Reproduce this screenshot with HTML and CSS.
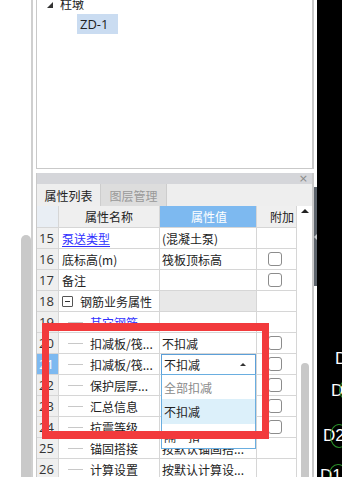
FILE: index.html
```html
<!DOCTYPE html>
<html>
<head>
<meta charset="utf-8">
<link rel="stylesheet" href="styles.css">
</head>
<body>
<div class="app">
  <div class="gutter"></div>
  <div class="vscroll"><div class="vthumb"></div></div>
  <div class="sep"></div>
  <div class="main">
    <div class="tree">
      <div class="tree-row parent"><span class="expander"></span><span>柱墩</span></div>
      <div class="tree-row child"><span class="sel">ZD-1</span></div>
    </div>
    <div class="props">
      <div class="titlebar"><span class="close">×</span></div>
      <div class="tabs"><div class="tab active">属性列表</div><div class="tab inactive">图层管理</div></div>
      <div class="grid-wrap">
        <div class="grid">
          <div class="c h num"></div><div class="c h name">属性名称</div><div class="c h val">属性值</div><div class="c h add">附加</div>

          <div class="c num">15</div><div class="c name"><span class="link">泵送类型</span></div><div class="c val">(混凝土泵)</div><div class="c add"></div>
          <div class="c num">16</div><div class="c name">底标高(m)</div><div class="c val">筏板顶标高</div><div class="c add"><span class="chk"></span></div>
          <div class="c num">17</div><div class="c name">备注</div><div class="c val"></div><div class="c add"><span class="chk"></span></div>
          <div class="c num">18</div><div class="c name"><span class="minus"></span><span class="group">钢筋业务属性</span></div><div class="c val grey"></div><div class="c add"></div>
          <div class="c num">19</div><div class="c name"><span class="branch"></span><span class="link">其它钢筋</span></div><div class="c val"></div><div class="c add"></div>
          <div class="c num">20</div><div class="c name"><span class="branch"></span>扣减板/筏...</div><div class="c val">不扣减</div><div class="c add"><span class="chk"></span></div>
          <div class="c num selnum">21</div><div class="c name"><span class="branch"></span>扣减板/筏...</div>
          <div class="c val combo-cell">
            <div class="combo"><span>不扣减</span><span class="arrow"></span></div>
            <div class="dropdown">
              <div class="opt dim">全部扣减</div>
              <div class="opt hot">不扣减</div>
              <div class="opt">隔一扣一</div>
            </div>
          </div>
          <div class="c add"><span class="chk"></span></div>
          <div class="c num">22</div><div class="c name"><span class="branch"></span>保护层厚...</div><div class="c val"></div><div class="c add"><span class="chk"></span></div>
          <div class="c num">23</div><div class="c name"><span class="branch"></span>汇总信息</div><div class="c val"></div><div class="c add"><span class="chk"></span></div>
          <div class="c num">24</div><div class="c name"><span class="branch"></span>抗震等级</div><div class="c val"></div><div class="c add"><span class="chk"></span></div>
          <div class="c num">25</div><div class="c name"><span class="branch"></span>锚固搭接</div><div class="c val">按默认锚固搭...</div><div class="c add"></div>
          <div class="c num">26</div><div class="c name"><span class="branch"></span>计算设置</div><div class="c val">按默认计算设...</div><div class="c add"></div>
        </div>
        <div class="scrollbar">
          <div class="up"></div>
          <div class="track"><div class="thumb"></div></div>
        </div>
      </div>
    </div>
  </div>
  <div class="strip"><div class="strip-dark"><span class="strip-arrow"></span></div></div>
  <div class="canvas">
    <span class="lbl l1">D</span>
    <span class="lbl l2">D</span>
    <span class="ring r2"></span>
    <span class="lbl l3">D2</span>
    <span class="ring r3"></span>
    <span class="lbl l4">D1</span>
    <span class="ring r4"></span>
  </div>
</div>
<div class="redbox"></div>
</body>
</html>
```

FILE: styles.css
```css
* { box-sizing: border-box; margin: 0; padding: 0; }
html, body { width: 342px; height: 477px; overflow: hidden; background: #fff; }
body {
  position: relative;
  font-family: "Noto Sans CJK SC", "Noto Sans", sans-serif;
  font-size: 12px;
  color: #222;
}
.app { display: flex; height: 477px; }
.gutter { width: 21px; flex: none; }
.vscroll { width: 10px; flex: none; display: flex; flex-direction: column; padding-top: 235px; }
.vthumb { flex: 1; background: #c9c9c9; border-radius: 5px 5px 0 0; }
.sep { width: 5px; flex: none; border-left: 2px solid #cfcfcf; }

.main { width: 278px; flex: none; display: flex; flex-direction: column; overflow: hidden; }

.tree {
  height: 169px; flex: none;
  border: 1px solid #c9c9c9; border-top: 0; border-right-width: 2px;
}
.tree-row { display: flex; align-items: center; white-space: nowrap; }
.tree-row.parent { height: 22px; margin-top: -8px; padding-left: 10px; }
.tree-row.child { height: 20px; padding-left: 40px; }
.expander {
  width: 0; height: 0; margin-right: 7px;
  border-left: 6px solid transparent; border-bottom: 6px solid #333;
  margin-top: 4px;
}
.sel { background: #cadcf1; height: 20px; line-height: 20px; padding: 0 9px 0 3px; font-size: 13px; font-family: "Open Sans", "Noto Sans", sans-serif; }

.props {
  flex: 1; margin-top: 4px; display: flex; flex-direction: column;
  border-left: 1px solid #c9c9c9; border-right: 2px solid #c9c9c9;
}
.titlebar { height: 11px; background: #d5d6da; display: flex; justify-content: flex-end; align-items: center; padding-right: 4px; }
.close { color: #8a8a8a; font-size: 11px; line-height: 11px; font-family: "DejaVu Sans", sans-serif; }
.tabs { height: 22px; background: #eeeeee; display: flex; }
.tab { display: flex; align-items: center; justify-content: center; font-size: 12px; }
.tab.active { width: 64px; color: #222; border-right: 1px solid #cdcdcd; }
.tab.inactive { width: 66px; color: #999; background: #dddddd; border-right: 1px solid #cdcdcd; }

.grid-wrap { flex: 1; display: flex; }
.grid {
  width: 260px; flex: none;
  display: grid; grid-template-columns: 22px 101px 97px 40px;
  grid-template-rows: 22px; grid-auto-rows: 21px;
}
.c {
  border-right: 1px solid #d6d6d6; border-bottom: 1px solid #d6d6d6;
  display: flex; align-items: center; white-space: nowrap;
  padding-left: 3px;
}
.c.h { justify-content: center; padding-left: 0; background: #efefef; }
.c.h.num { background: #e9eef4; }
.c.h.val { background: #7db9f0; color: #fff; }
.c.num { background: #efefef; font-family: "Open Sans", "Noto Sans", sans-serif; font-size: 13px; color: #333; padding-left: 2px; }
.c.num.selnum { background: #7db9f0; color: #fff; }
.c.val { padding-left: 2px; }
.c.val.grey { background: #e8e8e8; }
.c.add { padding-left: 11px; }
.link { color: #3030ff; text-decoration: underline; text-underline-offset: 2px; }
.minus {
  width: 11px; height: 11px; border: 1px solid #555; border-radius: 1px; margin-right: 7px;
  display: flex; align-items: center; justify-content: center; flex: none;
}
.minus::before { content: ""; width: 5px; height: 1px; background: #333; }
.branch { width: 15px; height: 1px; background: #c8c8c8; margin: 0 7px 0 6px; flex: none; }
.chk { width: 14px; height: 14px; border: 1px solid #8c8c8c; border-radius: 3px; background: #fff; }

.combo-cell { position: relative; padding: 0; overflow: visible; border-right-color: #d6d6d6; }
.combo {
  flex: 1; height: 21px; margin-left: -1px; margin-bottom: -1px;
  border: 1px solid #5b9fd8; display: flex; align-items: center; justify-content: space-between;
  padding: 0 9px 0 2px; background: #fff;
}
.arrow { width: 0; height: 0; border-left: 3px solid transparent; border-right: 3px solid transparent; border-bottom: 3px solid #333; }
.dropdown {
  position: absolute; left: 1px; top: 20px; width: 95px; height: 75px;
  border: 1px solid #6aaee0; background: #fff; z-index: 2;
}
.opt { height: 24px; display: flex; align-items: center; padding-left: 2px; }
.opt.dim { color: #8a8a8a; }
.opt.hot { background: #dcf0fa; height: 25px; }

.scrollbar { flex: 1; display: flex; flex-direction: column; background: #fff; }
.up { height: 21px; display: flex; justify-content: center; padding-top: 3px; }
.up::before { content: ""; width: 0; height: 0; border-left: 4px solid transparent; border-right: 4px solid transparent; border-bottom: 4px solid #222; }
.track { flex: 1; padding: 136px 3px 0 4px; display: flex; }
.thumb { flex: 1; background: #c8c8c8; border-radius: 4px 4px 0 0; }

.strip { width: 3px; flex: none; padding-top: 187px; }
.strip-dark { height: 99px; background: #5d646c; position: relative; }
.strip-arrow { position: absolute; left: 0; top: 47px; width: 0; height: 0; border-top: 3px solid transparent; border-bottom: 3px solid transparent; border-right: 3px solid #c9ccd0; }

.canvas { flex: 1; background: #000; position: relative; overflow: hidden; }
.lbl { position: absolute; color: #fff; font-family: "Liberation Sans", sans-serif; font-size: 17px; line-height: 17px; }
.l1 { left: 18px; top: 350px; }
.l2 { left: 14px; top: 382px; }
.l3 { left: 6px; top: 427px; }
.l4 { left: 3px; top: 467px; }
.ring { position: absolute; border: 1px solid #2a8f2a; border-radius: 50%; }
.r2 { left: 22px; top: 380px; width: 16px; height: 20px; }
.r3 { left: 13px; top: 424px; width: 18px; height: 24px; }
.r4 { left: 12px; top: 464px; width: 18px; height: 20px; }

.redbox {
  position: absolute; left: 42px; top: 323px; width: 227px; height: 116px;
  border-style: solid; border-color: #f23a3c; border-width: 8px 7px;
  z-index: 5;
}
```
